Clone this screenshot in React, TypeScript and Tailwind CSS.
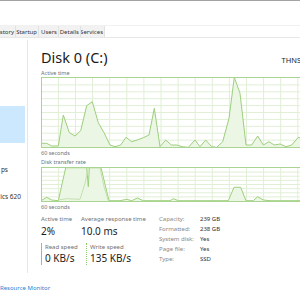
import React from "react";

// points read off the reference graphs (zoom coords, 3x)
const activePts: [number, number][] = [
  [33, 250], [50, 250], [65, 258], [85, 258], [100, 165], [118, 218], [135, 228], [152, 212],
  [170, 137], [187, 125], [205, 188], [222, 218], [240, 255], [255, 260], [272, 255], [288, 232],
  [305, 245], [322, 240], [340, 233], [357, 225], [373, 145], [390, 260], [407, 240], [424, 255],
  [440, 255], [457, 260], [475, 262], [495, 240], [510, 260], [527, 240], [545, 260], [560, 262],
  [578, 245], [597, 175], [613, 52], [630, 100], [648, 255], [665, 255], [683, 228], [700, 255],
  [717, 245], [733, 255], [750, 252], [768, 260], [785, 255], [805, 232], [830, 240],
];

const readPts: [number, number][] = [
  [33, 182], [50, 172], [65, 180], [85, 182], [107, 83], [170, 83], [175, 140], [178, 83],
  [213, 83], [237, 182], [270, 182], [290, 178], [305, 182], [322, 174], [340, 182], [420, 182],
  [430, 176], [445, 182], [595, 182], [612, 142], [632, 142], [648, 182], [670, 182], [683, 170],
  [700, 180], [720, 182], [830, 182],
];

const writePts: [number, number][] = [
  [85, 180], [110, 176], [150, 178], [165, 130], [175, 83], [210, 83], [222, 140], [235, 182],
];

const toPts = (arr: [number, number][], ox: number, oy: number, top: number) =>
  arr.map(([zx, zy]) => `${(ox + zx / 3 - 42).toFixed(1)},${(oy + zy / 3 - top).toFixed(1)}`).join(" ");

const Grid = ({ w, h, rows }: { w: number; h: number; rows: number }) => (
  <>
    {Array.from({ length: 16 }).map((_, i) => (
      <line key={"v" + i} x1={16.4 + i * 17.1} y1={0} x2={16.4 + i * 17.1} y2={h} stroke="#e1efd6" strokeWidth={1} />
    ))}
    {Array.from({ length: rows - 1 }).map((_, i) => (
      <line key={"h" + i} x1={0} y1={((i + 1) * h) / rows} x2={w} y2={((i + 1) * h) / rows} stroke="#e1efd6" strokeWidth={1} />
    ))}
  </>
);

const ActiveGraph = () => {
  const pts = toPts(activePts, 30, 60, 78);
  return (
    <div className="h-[71px] w-[272px] border border-[#a9d591] bg-white">
      <svg width="270" height="69" className="block">
        <Grid w={270} h={69} rows={10} />
        <polygon points={`0,69 ${pts} 270,69`} fill="#ecf6e4" />
        <polyline points={pts} fill="none" stroke="#9dcf7d" strokeWidth={1} />
      </svg>
    </div>
  );
};

const TransferGraph = () => {
  const rp = toPts(readPts, 30, 140, 168);
  const wp = toPts(writePts, 30, 140, 168);
  return (
    <div className="h-[35px] w-[272px] border border-[#a9d591] bg-white">
      <svg width="270" height="33" className="block">
        <Grid w={270} h={33} rows={8} />
        <polygon points={`0,33 ${rp} 270,33`} fill="#ecf6e4" />
        <polyline points={rp} fill="none" stroke="#9dcf7d" strokeWidth={1} />
        <polyline points={wp} fill="none" stroke="#c3e2ae" strokeWidth={1} />
      </svg>
    </div>
  );
};

const info = [
  ["Capacity:", "239 GB"],
  ["Formatted:", "238 GB"],
  ["System disk:", "Yes"],
  ["Page file:", "Yes"],
  ["Type:", "SSD"],
];

const tabs = [
  { name: "History", w: "w-[16px]" },
  { name: "Startup", w: "w-[23px]" },
  { name: "Users", w: "w-[20px]" },
  { name: "Details", w: "w-[22px]" },
  { name: "Services", w: "w-[24px]" },
];

export default function App() {
  return (
    <div
      className="w-[300px] h-[300px] overflow-hidden bg-white text-[#1b1b1b] flex flex-col"
      style={{ fontFamily: '"Noto Sans", "Open Sans", sans-serif' }}
    >
      <div className="h-px bg-[#a3a3a3] shrink-0" />
      <div className="h-[25px] border-b border-[#f1f1f1] shrink-0" />

      {/* tab strip */}
      <div className="h-[12px] flex border-b border-[#e8e8e8] shrink-0">
        {tabs.map((t) => (
          <div
            key={t.name}
            className={`${t.w} h-full flex items-center justify-end overflow-hidden bg-[#f2f2f2] border-r border-[#e2e2e2] pr-[1px] text-[6px] leading-none text-[#333] whitespace-nowrap`}
          >
            {t.name}
          </div>
        ))}
      </div>

      <div className="h-[245px] flex shrink-0">
        {/* sidebar */}
        <div className="w-[28px] pt-[2px] shrink-0">
          <div className="h-[233px] border-r border-[#e6e6e6] overflow-hidden">
            <div className="mt-[66px] h-[37px] w-[25px] bg-[#cce8ff]" />
            <div className="mt-[22px] h-[10px] flex items-center justify-end pr-[19px] text-[6.5px] text-[#333] whitespace-nowrap">
              ps
            </div>
            <div className="mt-[17px] h-[10px] flex items-center justify-end pr-[6px] text-[6.5px] text-[#333] whitespace-nowrap">
              ics 620
            </div>
          </div>
        </div>

        {/* main panel */}
        <div className="pl-[13px] flex flex-col">
          <div className="mt-[10px] h-[18px] flex items-baseline whitespace-nowrap">
            <span className="text-[14.5px] leading-[18px] text-[#1b1b1b]">Disk 0 (C:)</span>
            <span className="ml-[174px] text-[7.5px] text-[#1b1b1b]">THNSN5256GPUK NVMe TOSHIBA 256GB</span>
          </div>
          <div className="h-[11px] flex items-end">
            <span className="text-[5.5px] leading-[8px] text-[#717171]">Active time</span>
          </div>
          <ActiveGraph />
          <div className="h-[10px] text-[5.5px] leading-[10px] text-[#717171]">60 seconds</div>
          <div className="h-[9px] text-[5.5px] leading-[9px] text-[#717171]">Disk transfer rate</div>
          <TransferGraph />
          <div className="h-[9px] text-[5.5px] leading-[10px] text-[#717171]">60 seconds</div>

          <div className="mt-[3px] flex">
            <div className="w-[118px]">
              <div className="flex h-[11px] items-center text-[6px] text-[#717171] whitespace-nowrap">
                <span className="w-[40px]">Active time</span>
                <span>Average response time</span>
              </div>
              <div className="flex h-[12px] items-center text-[10px] text-[#1b1b1b] whitespace-nowrap">
                <span className="w-[40px]">2%</span>
                <span>10.0 ms</span>
              </div>
              <div className="mt-[6px] flex h-[22px] whitespace-nowrap">
                <div className="w-[45px] border-l-[1.5px] border-[#8fc96b] pl-[3px]">
                  <div className="h-[9px] text-[6px] leading-[9px] text-[#717171]">Read speed</div>
                  <div className="h-[13px] text-[10px] leading-[13px]">0 KB/s</div>
                </div>
                <div className="border-l-[1.5px] border-dotted border-[#8fc96b] pl-[3px]">
                  <div className="h-[9px] text-[6px] leading-[9px] text-[#717171]">Write speed</div>
                  <div className="h-[13px] text-[10px] leading-[13px]">135 KB/s</div>
                </div>
              </div>
            </div>
            <div className="flex flex-col">
              {info.map(([k, v]) => (
                <div key={k} className="flex h-[10px] items-center text-[6px] whitespace-nowrap">
                  <span className="w-[41px] text-[#8a8a8a]">{k}</span>
                  <span className="text-[#333]">{v}</span>
                </div>
              ))}
            </div>
          </div>
        </div>
      </div>

      <div className="h-[10px] flex items-center text-[6px] text-[#2a7fd4] whitespace-nowrap shrink-0">
        Resource Monitor
      </div>
    </div>
  );
}
